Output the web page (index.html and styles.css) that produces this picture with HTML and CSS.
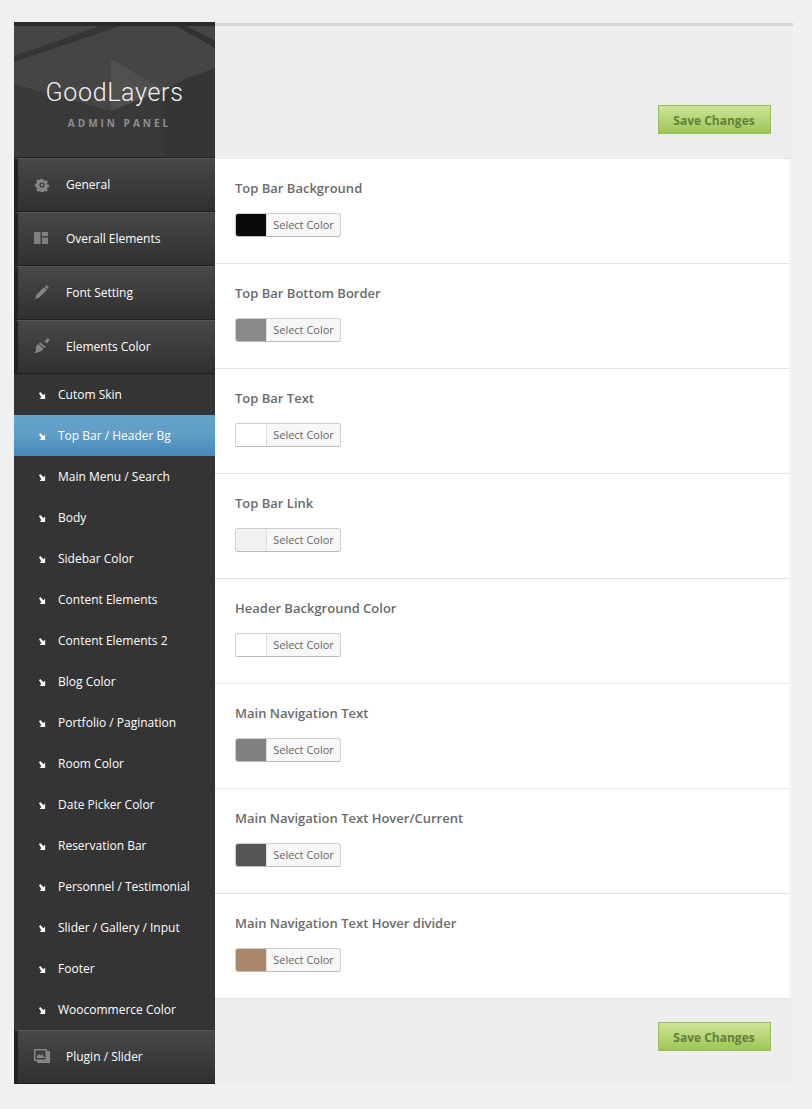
FILE: index.html
```html
<!DOCTYPE html>
<html lang="en">
<head>
<meta charset="utf-8">
<title>GoodLayers Admin Panel</title>
<link rel="stylesheet" href="styles.css">
</head>
<body>
<svg class="defs" width="0" height="0" aria-hidden="true">
  <symbol id="arrow" viewBox="0 0 8 8"><path fill="#fff" d="M0 1.500L1.500 0l3.600 3.600L7 1.700V8H.7l1.900-1.900.1-.1z"/></symbol>
</svg>
<div class="panel">
  <aside class="sidebar">
    <div class="logo">
      <svg class="logo-art" width="201" height="132" viewBox="0 0 201 132" aria-hidden="true">
        <path d="M0 30 L86 0 L106 0 L0 36Z" fill="#2f2f2f" opacity=".7"/>
        <path d="M162 0 L172 0 L201 15 L201 22Z" fill="#2c2c2c" opacity=".8"/>
        <path d="M97 33 L150 64 L97 85Z" fill="#5a5a5a" opacity=".5"/>
        <path d="M0 58 L97 85 L150 64 L150 132 L0 132Z" fill="#2c2c2c" opacity=".45"/>
        <path d="M150 64 L174 52 L201 42 L201 132 L150 132Z" fill="#2c2c2c" opacity=".6"/>
      </svg>
      <div class="brand">GoodLayers</div>
      <div class="sub-brand">ADMIN PANEL</div>
    </div>
    <nav>
      <a class="nav-main">
        <svg class="nav-icon gear" width="14" height="14" viewBox="0 0 16 16"><path fill="#858585" fill-rule="evenodd" d="M6.600 1h2.800l.4 1.800 1.300.6 1.600-1 2 2-1 1.600.5 1.300 1.800.4v2.800l-1.800.4-.5 1.300 1 1.600-2 2-1.600-1-1.300.5-.4 1.800H6.600l-.4-1.800-1.300-.5-1.600 1-2-2 1-1.600-.5-1.300L0 9.400V6.600l1.800-.4.5-1.300-1-1.600 2-2 1.600 1 1.300-.6zM8 5a3 3 0 1 0 0 6 3 3 0 0 0 0-6zm0 1.600a1.400 1.400 0 1 1 0 2.800 1.400 1.400 0 0 1 0-2.800z"/></svg>
        <span>General</span>
      </a>
      <a class="nav-main">
        <svg class="nav-icon layout" width="14" height="12" viewBox="0 0 14 12"><path fill="#808080" d="M0 0h6.500v12H0zM8 0h6v4H8zM8 5.500h6V12H8z"/></svg>
        <span>Overall Elements</span>
      </a>
      <a class="nav-main">
        <svg class="nav-icon pencil" width="14" height="14" viewBox="0 0 15 15"><path fill="#858585" d="M12 0l3 3-1.600 1.600-3-3zM9.700 2.300l3 3-8.200 8.200L0 15l1.500-4.500z"/></svg>
        <span>Font Setting</span>
      </a>
      <a class="nav-main">
        <svg class="nav-icon brush" width="16" height="15" viewBox="0 0 17 16"><path fill="#858585" d="M11 3.500l3.800-3.500 2 2-3.300 3.900zM6.500 4.500l6 5-1.500 1.300L5 5.800zM4.500 6.500l5.500 5c-1.500 2.500-5 4.500-10 4.500 2-1.500 2.500-3 2-5 0-2 1-3.500 2.500-4.500z"/></svg>
        <span>Elements Color</span>
      </a>
      <ul class="sub-menu">
        <li class="sub-item"><svg class="arrow"><use href="#arrow"/></svg>Cutom Skin</li>
        <li class="sub-item active"><svg class="arrow"><use href="#arrow"/></svg>Top Bar / Header Bg</li>
        <li class="sub-item"><svg class="arrow"><use href="#arrow"/></svg>Main Menu / Search</li>
        <li class="sub-item"><svg class="arrow"><use href="#arrow"/></svg>Body</li>
        <li class="sub-item"><svg class="arrow"><use href="#arrow"/></svg>Sidebar Color</li>
        <li class="sub-item"><svg class="arrow"><use href="#arrow"/></svg>Content Elements</li>
        <li class="sub-item"><svg class="arrow"><use href="#arrow"/></svg>Content Elements 2</li>
        <li class="sub-item"><svg class="arrow"><use href="#arrow"/></svg>Blog Color</li>
        <li class="sub-item"><svg class="arrow"><use href="#arrow"/></svg>Portfolio / Pagination</li>
        <li class="sub-item"><svg class="arrow"><use href="#arrow"/></svg>Room Color</li>
        <li class="sub-item"><svg class="arrow"><use href="#arrow"/></svg>Date Picker Color</li>
        <li class="sub-item"><svg class="arrow"><use href="#arrow"/></svg>Reservation Bar</li>
        <li class="sub-item"><svg class="arrow"><use href="#arrow"/></svg>Personnel / Testimonial</li>
        <li class="sub-item"><svg class="arrow"><use href="#arrow"/></svg>Slider / Gallery / Input</li>
        <li class="sub-item"><svg class="arrow"><use href="#arrow"/></svg>Footer</li>
        <li class="sub-item"><svg class="arrow"><use href="#arrow"/></svg>Woocommerce Color</li>
      </ul>
      <a class="nav-main">
        <svg class="nav-icon slider" width="16" height="14" viewBox="0 0 16 14"><path fill="#858585" fill-rule="evenodd" d="M0 0h13v2h3v12H3v-2H0zM1.500 1.500v9h10v-9z"/><path fill="#858585" d="M3 7l2-2 1.500 1.500L8 5l2.500 3v1H3z"/></svg>
        <span>Plugin / Slider</span>
      </a>
    </nav>
  </aside>
  <main class="content">
    <div class="bar top"><button class="save">Save Changes</button></div>
    <div class="rows">
      <section class="row"><h3>Top Bar Background</h3><div class="picker"><i class="swatch c1"></i><span>Select Color</span></div></section>
      <section class="row"><h3>Top Bar Bottom Border</h3><div class="picker"><i class="swatch c2"></i><span>Select Color</span></div></section>
      <section class="row"><h3>Top Bar Text</h3><div class="picker"><i class="swatch c3"></i><span>Select Color</span></div></section>
      <section class="row"><h3>Top Bar Link</h3><div class="picker"><i class="swatch c4"></i><span>Select Color</span></div></section>
      <section class="row"><h3>Header Background Color</h3><div class="picker"><i class="swatch c3"></i><span>Select Color</span></div></section>
      <section class="row"><h3>Main Navigation Text</h3><div class="picker"><i class="swatch c5"></i><span>Select Color</span></div></section>
      <section class="row"><h3>Main Navigation Text Hover/Current</h3><div class="picker"><i class="swatch c6"></i><span>Select Color</span></div></section>
      <section class="row last"><h3>Main Navigation Text Hover divider</h3><div class="picker"><i class="swatch c7"></i><span>Select Color</span></div></section>
    </div>
    <div class="bar bottom"><button class="save">Save Changes</button></div>
  </main>
</div>
</body>
</html>
```
FILE: styles.css
```css
* { box-sizing: border-box; }
html, body { margin: 0; padding: 0; }
body {
  background: #f0f0f0;
  font-family: "Open Sans", sans-serif;
  height: 1109px;
  overflow: hidden;
}
.defs { position: absolute; }
.panel {
  display: flex;
  width: 779px;
  height: 1062px;
  margin: 22px 0 0 14px;
}

/* Sidebar */
.sidebar {
  width: 201px;
  flex: none;
  background-color: #333;
  background-image: linear-gradient(135deg, #373737 25%, #313131 25%, #313131 50%, #373737 50%, #373737 75%, #313131 75%);
  background-size: 4px 4px;
}
.logo {
  position: relative;
  height: 136px;
  border-top: 4px solid #2b2b2b;
  border-bottom: 1px solid #222;
  background-color: #444;
  background-image: linear-gradient(135deg, #4a4a4a 25%, #404040 25%, #404040 50%, #4a4a4a 50%, #4a4a4a 75%, #404040 75%);
  background-size: 4px 4px;
  text-align: center;
  overflow: hidden;
}
.logo-art { position: absolute; left: 0; top: 0; }
.brand {
  position: relative;
  margin-top: 51px;
  font-family: Roboto, sans-serif;
  font-weight: 300;
  font-size: 25px;
  line-height: 32px;
  letter-spacing: .7px;
  color: #f0f0f0;
}
.sub-brand {
  position: relative;
  margin-top: 7px;
  padding-left: 10px;
  font-size: 10px;
  line-height: 14px;
  font-weight: 700;
  letter-spacing: 3px;
  color: #8f8f8f;
}
.nav-main {
  display: block;
  height: 54px;
  border-left: 4px solid #222;
  border-top: 1px solid #555;
  border-bottom: 1px solid #1e1e1e;
  background: linear-gradient(#484848, #303030);
  color: #fff;
  font-size: 12px;
  position: relative;
}
.nav-main span { position: absolute; left: 48px; top: 17px; line-height: 18px; }
.nav-icon { position: absolute; }
.gear { left: 17px; top: 19px; }
.layout { left: 16px; top: 19px; }
.pencil { left: 17px; top: 18px; }
.brush { left: 16px; top: 17px; }
.slider { left: 16px; top: 18px; }
.sub-menu { list-style: none; margin: 0; padding: 0; }
.sub-item {
  display: flex;
  align-items: center;
  height: 41px;
  padding-left: 25px;
  font-size: 12px;
  color: #fff;
}
.arrow {
  width: 7px;
  height: 7px;
  margin: 1px 12px 0 0;
  flex: none;
}
.sub-item.active {
  background-color: #5b9dc8;
  background-image:
    linear-gradient(135deg, rgba(255,255,255,.06) 25%, transparent 25%, transparent 50%, rgba(255,255,255,.06) 50%, rgba(255,255,255,.06) 75%, transparent 75%),
    linear-gradient(#60a0c9, #5a9ac4 50%, #3f85b5);
  background-size: 4px 4px, 100% 100%;
}

/* Content */
.content {
  flex: 1;
  display: flex;
  flex-direction: column;
  background-color: #efefef;
  background-image: linear-gradient(135deg, #eaeaea 25%, #f1f1f1 25%, #f1f1f1 50%, #eaeaea 50%, #eaeaea 75%, #f1f1f1 75%);
  background-size: 4px 4px;
}
.bar {
  display: flex;
  justify-content: flex-end;
  padding-right: 22px;
}
.bar.top {
  height: 136px;
  margin-top: 1px;
  border-top: 3px solid #d6d6d6;
  padding-top: 79px;
  border-bottom: 1px solid #e2e2e2;
}
.bar.bottom { flex: 1; padding-top: 23px; }
.save {
  width: 113px;
  height: 29px;
  padding: 2px 1px 0 0;
  border: 1px solid #9aba5c;
  background: linear-gradient(#cfe596, #9cc557);
  color: #62803a;
  font-family: "Open Sans", sans-serif;
  font-size: 12px;
  line-height: 22px;
  font-weight: 700;
}
.rows {
  background: #fff;
  border-right: 4px solid #f4f4f4;
  border-bottom: 1px solid #e2e2e2;
}
.row {
  height: 105px;
  padding: 20px 20px 0;
  border-bottom: 1px solid #e2e2e2;
}
.row.last { border-bottom: 0; height: 104px; }
.row h3 {
  margin: 0 0 16px;
  font-size: 13px;
  line-height: 18px;
  font-weight: 600;
  color: #6b6b6b;
}
.picker {
  display: flex;
  width: 106px;
  height: 24px;
  border: 1px solid #cfcfcf;
  border-bottom-color: #bbb;
  border-radius: 3px;
  background: #f7f7f7;
  overflow: hidden;
}
.swatch { width: 30px; flex: none; }
.picker span {
  flex: 1;
  border-left: 1px solid #ddd;
  font-size: 11px;
  line-height: 22px;
  text-align: center;
  color: #666;
}
.c1 { background: #0a0a0a; }
.c2 { background: #8a8a8a; }
.c3 { background: #fff; }
.c4 { background: #f2f2f2; }
.c5 { background: #808080; }
.c6 { background: #555; }
.c7 { background: #ab8769; }
```
